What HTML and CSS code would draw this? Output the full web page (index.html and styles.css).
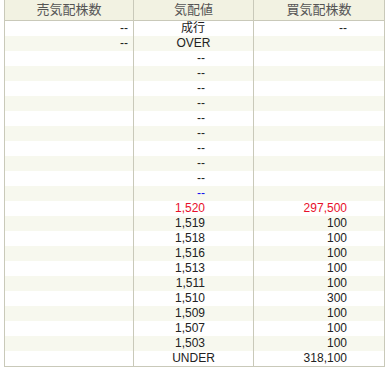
FILE: index.html
```html
<!DOCTYPE html>
<html lang="ja">
<head>
<meta charset="utf-8">
<link rel="stylesheet" href="styles.css">
</head>
<body>
<table class="board">
  <thead>
    <tr><th class="c-sell">売気配株数</th><th class="c-price">気配値</th><th class="c-buy">買気配株数</th></tr>
  </thead>
  <tbody>
    <tr><td class="sell">--</td><td class="price">成行</td><td class="buy">--</td></tr>
    <tr><td class="sell">--</td><td class="price mark">OVER</td><td class="buy"></td></tr>
    <tr><td class="sell"></td><td class="price">--</td><td class="buy"></td></tr>
    <tr><td class="sell"></td><td class="price">--</td><td class="buy"></td></tr>
    <tr><td class="sell"></td><td class="price">--</td><td class="buy"></td></tr>
    <tr><td class="sell"></td><td class="price">--</td><td class="buy"></td></tr>
    <tr><td class="sell"></td><td class="price">--</td><td class="buy"></td></tr>
    <tr><td class="sell"></td><td class="price">--</td><td class="buy"></td></tr>
    <tr><td class="sell"></td><td class="price">--</td><td class="buy"></td></tr>
    <tr><td class="sell"></td><td class="price">--</td><td class="buy"></td></tr>
    <tr><td class="sell"></td><td class="price">--</td><td class="buy"></td></tr>
    <tr><td class="sell"></td><td class="price blue">--</td><td class="buy"></td></tr>
    <tr><td class="sell"></td><td class="price red">1,520</td><td class="buy red">297,500</td></tr>
    <tr><td class="sell"></td><td class="price">1,519</td><td class="buy">100</td></tr>
    <tr><td class="sell"></td><td class="price">1,518</td><td class="buy">100</td></tr>
    <tr><td class="sell"></td><td class="price">1,516</td><td class="buy">100</td></tr>
    <tr><td class="sell"></td><td class="price">1,513</td><td class="buy">100</td></tr>
    <tr><td class="sell"></td><td class="price">1,511</td><td class="buy">100</td></tr>
    <tr><td class="sell"></td><td class="price">1,510</td><td class="buy">300</td></tr>
    <tr><td class="sell"></td><td class="price">1,509</td><td class="buy">100</td></tr>
    <tr><td class="sell"></td><td class="price">1,507</td><td class="buy">100</td></tr>
    <tr><td class="sell"></td><td class="price">1,503</td><td class="buy">100</td></tr>
    <tr><td class="sell"></td><td class="price mark">UNDER</td><td class="buy">318,100</td></tr>
  </tbody>
</table>
</body>
</html>
```
FILE: styles.css
```css
html, body {
  margin: 0;
  padding: 0;
  background: #fff;
}
body {
  padding-left: 4px;
  font-family: "Liberation Sans", Arial, "Noto Sans CJK JP", sans-serif;
  font-size: 12px;
  color: #222;
}
.board {
  border-collapse: collapse;
  table-layout: fixed;
  width: 381px;
  border-left: 1px solid #c9c9b9;
  border-right: 1px solid #c9c9b9;
  border-bottom: 1px solid #c9c9b9;
}
.board th {
  height: 20px;
  padding: 0;
  background: #f2f2e2;
  font-weight: normal;
  font-size: 13px;
  color: #555;
  text-align: center;
  border-bottom: 1px solid #c9c9b9;
  border-left: 1px solid #c9c9b9;
  line-height: 20px;
  vertical-align: middle;
}
.board th:first-child { border-left: none; }
.c-sell { width: 128px; }
.c-price { width: 119px; }
.board td {
  height: 15px;
  line-height: 15px;
  padding: 0;
  border-left: 1px solid #c9c9b9;
  vertical-align: middle;
  white-space: nowrap;
}
.board td:first-child { border-left: none; }
.board tbody tr:nth-child(even) td { background: #f7f8ee; }
.sell { text-align: right; padding-right: 5px !important; }
.price { text-align: right; padding-right: 48px !important; }
.price.mark { text-align: center; padding-right: 0 !important; }
.buy { text-align: right; padding-right: 37px !important; }
.red { color: #e8102a; }
.blue { color: #1010ee; }
```
